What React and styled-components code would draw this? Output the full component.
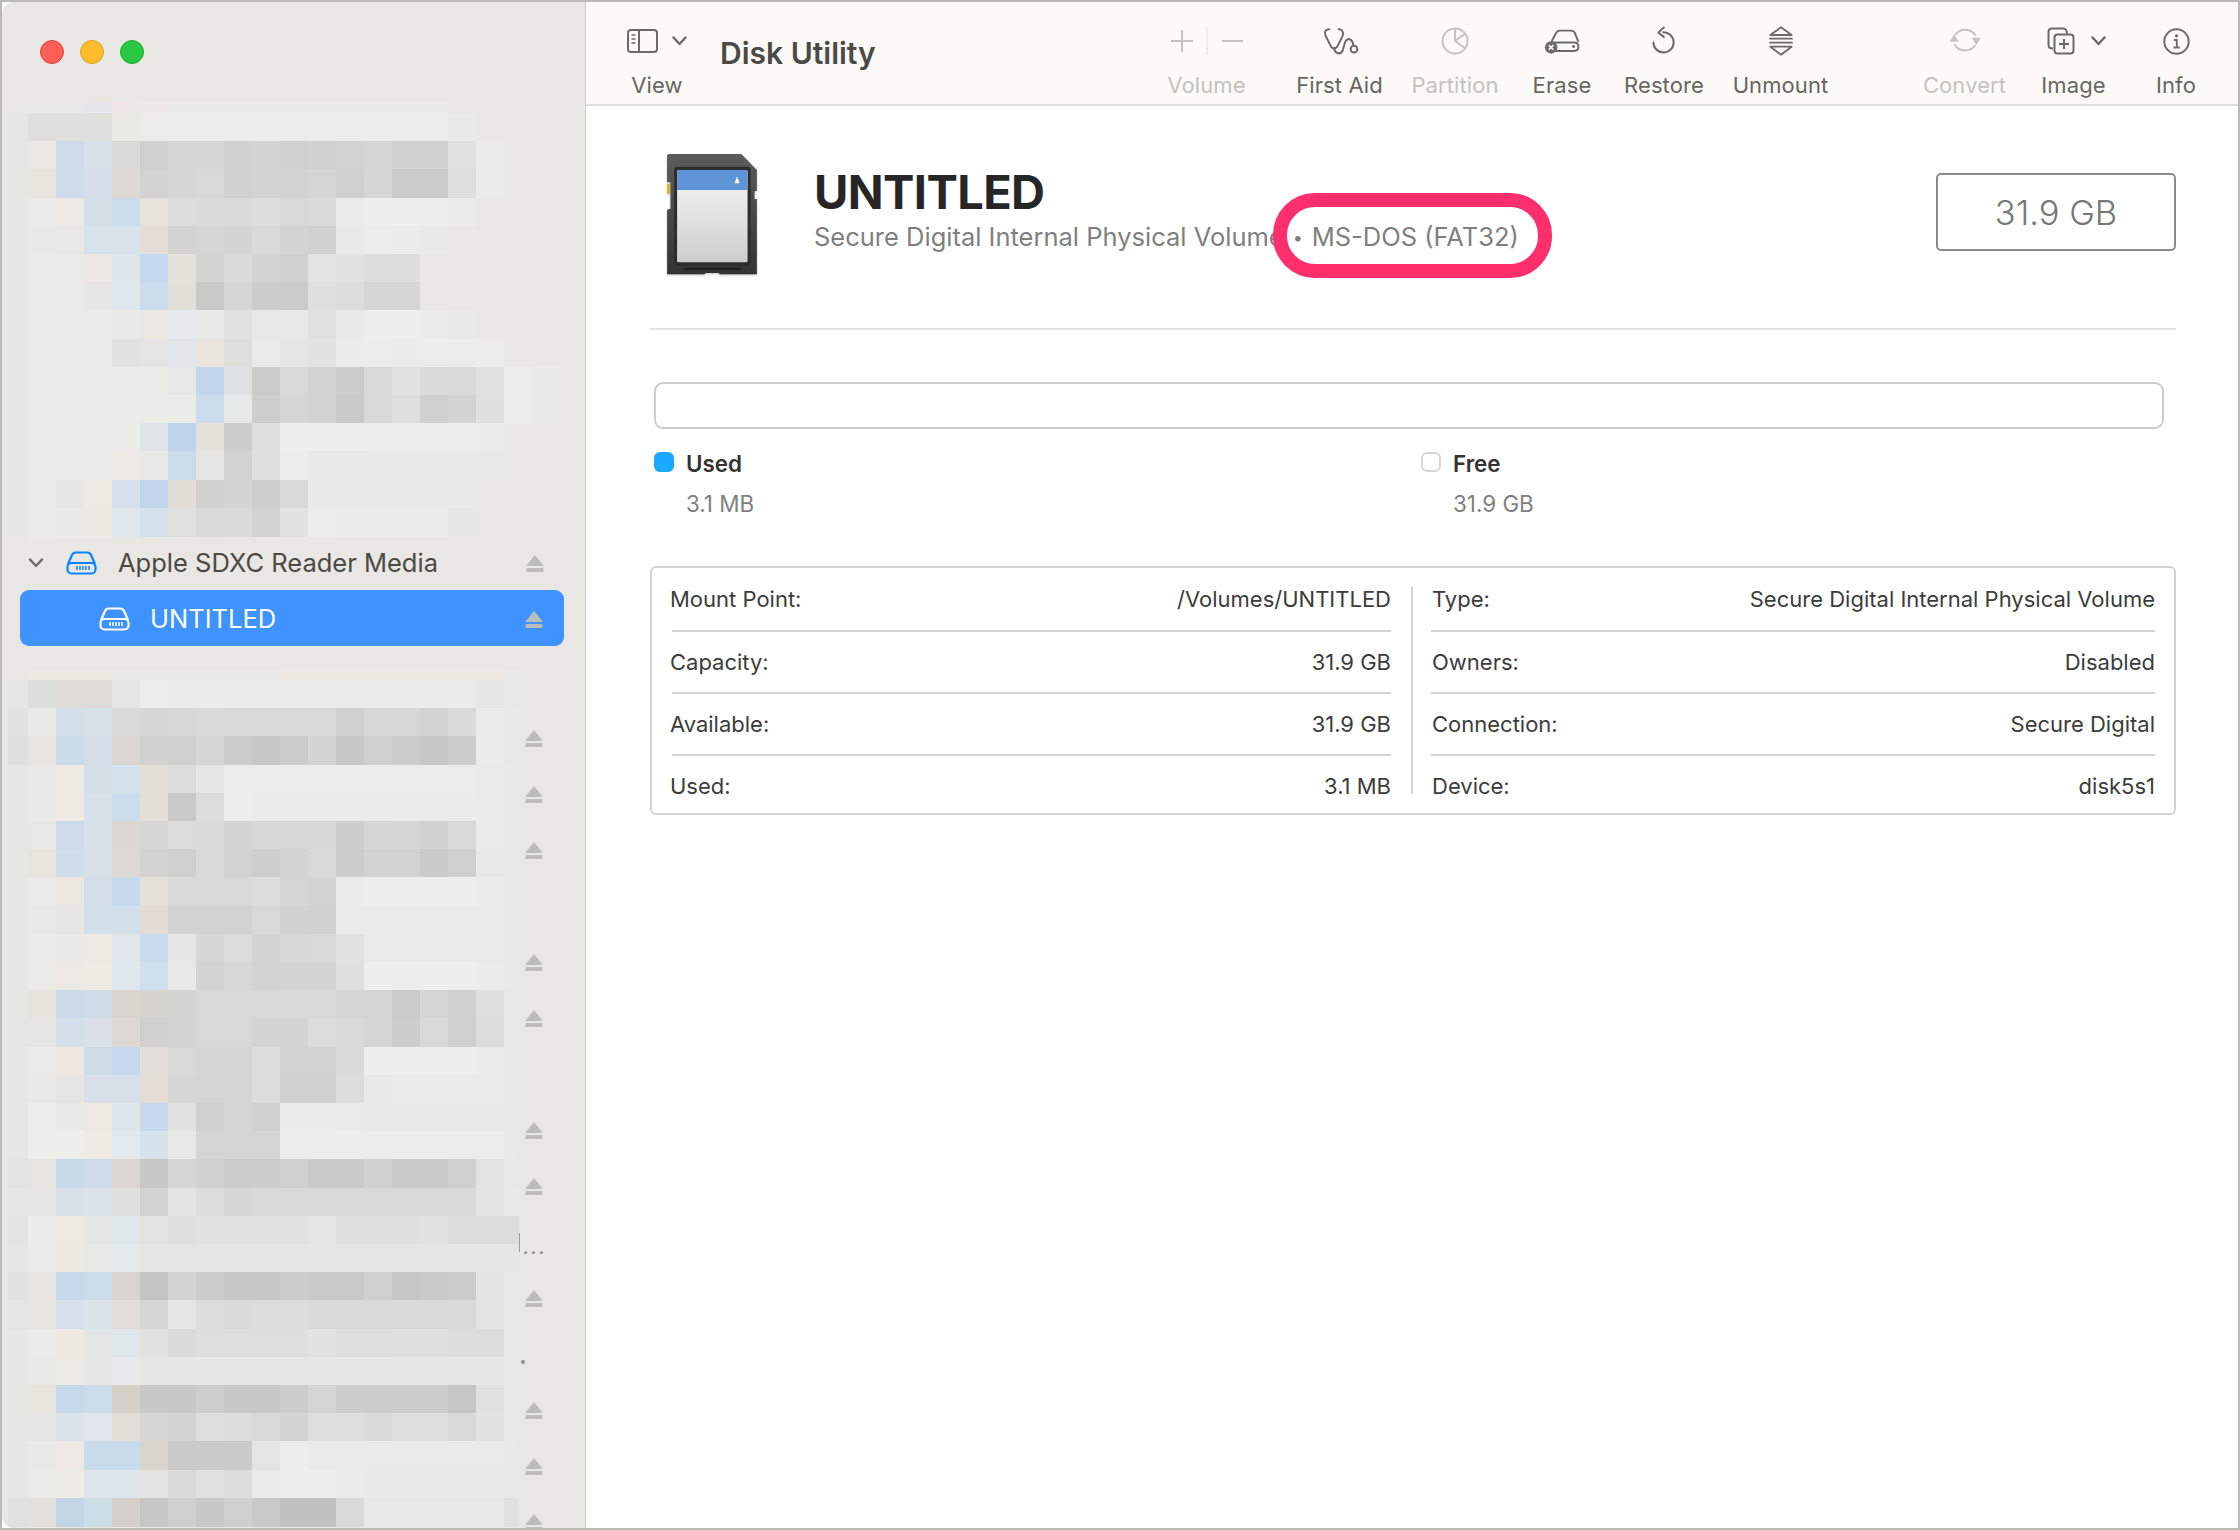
import React from "react";
import styled, { createGlobalStyle } from "styled-components";

const GlobalStyle = createGlobalStyle`
  html, body { margin: 0; padding: 0; background: #fff; }
  body { font-family: Inter, "Liberation Sans", sans-serif; -webkit-font-smoothing: antialiased; }
`;

const CELL = 28;
const ROW = 28.2;

// two chars = a warm grey, six chars = full colour, -- = nothing
const topMosaic = [
  "-- e6e9e5 e6e7e6 e5e5e8 ede5e8 ebe8e6 e9 e9 e9 e9 e9 e9 e9 e9 e9 e9",
  "e5 df df df e9e9e4 ec ec ec ec ec ec ec ec ec ec ec e9",
  "e5 ebe8e3 cddbe8 d5e0e9 d9 d0 d5 d5 d1 d4 cf d1 d2 d5 d1 d1 e0 ea",
  "e5 e8e5df cedce9 d6dfe9 dfd9d3 d2 d6 d8 d1 d3 d3 d5 cf d5 cb cb df eb",
  "e6 eaeae8 eee9e4 d5dfe8 cadcec e5e3dc dc da da dd d8 da eb ee ee ee eb",
  "e6 e9 e8 d8e2ea d7e2ea e3dcd7 d3 d5 d4 da d3 d1 e9 ec eb e9",
  "e6 ea ea ede8e3 dde4ea c4d9ee e4e1db d4 da d2 d0 e3 e1 dd dd",
  "e6 ea ea e6 dfe6ec cbdcec e1dfd8 c9 d6 cc cb df dd d6 d6",
  "e6 ea ea eaeaea e9 eae6e1 e5e8ec e9 e1 e8 e7 e0 e9 ed ed ea e9",
  "e6 ea ea ea e2 e4e4e5 e2e6e9 e9e4de de ea e4 e2 eb ec eb ec ec ec",
  "e6 ea ea ea eb eb e7e7e8 c1d5eb dee1e1 cb d8 d2 cc d8 e1 da d9 e0 ec e9",
  "e6 ea ea ea eb eb eb ccdcec e5e9e8 ce d5 d2 ca d8 de d0 d3 df ec e9",
  "e6 ea ea ea eb dfe5e7 bfd3e9 e5e2db cd de ed ed ed ec ec ec ec eb",
  "e6 ea ea ea ede9e4 e7e9e4 cadcec e4 d2 de ec e9 e9 e9 e9 e9 e9 e9",
  "e6 ea e5 ede9e3 d6e0ea c3d5ea e1dcd6 d1 d4 ce d9 e9 e8 e8 e8 e8 e8",
  "e6 eaeae8 e9 ece9e2 e0e6ee d4e2ee e1 d9 da d2 e2 ec eb eb eb eb e6",
];

const bottomMosaic = [
  "-- ece9e2 ece9e2 ece9e2 e9 e9 e9 e9 e9 e9 ebe8e1 ebe8e1 ebe8e1 ebe8e1 ebe8e1 ebe8e1 ebe8e1 ebe8e1 e9",
  "e5 dcdeda dedad5 dedad5 e5 ed eb eb eb eb eb eb eb eb eb eb eb e6 e8",
  "e2 e8 d2deea d7e0e9 d9 d5 d7 da d8 d8 d8 d8 cf d7 d7 d2 da eb e9",
  "df e7e4df cbdae9 d5dde9 dcd6d0 d1 cf d5 cc c7 cb d4 c7 cf cc c7 cd eb e7",
  "e6 e9 eee9e3 d5dfe8 d5e1ec e2ded8 db e4 ec ec ec ec ec ec ec ec ec ea e9",
  "e6 e9 eee9e3 d8e0e9 ccdcec e2ded8 c9 dc ed eb eb eb eb eb eb eb eb ea e9",
  "e6 e7 cddbe9 d7e1ea dcd6d0 d5 db da d4 d7 d7 d7 cd d6 d5 d1 d8 eb e9",
  "e6 e7e3dd cfdcea d7e0e9 dcd7d1 d2 d0 d9 d2 ce d4 d9 cc d2 d2 ca cf e8 e8",
  "e6 ea ece6e0 d3dee8 c7daec e3e0da d9 d8 d8 dc d5 d3 eb ee ee ee ee eb e9",
  "e6 e8 e6 d2deea d2deea e3dcd6 d2 d2 d2 d8 d1 d1 ea ea ea ea ea ea e9",
  "e6 eb e9 edeae3 dfe5ea c8dbec e6 d5 db d3 d7 d8 e1 ea ea ea ea ea e9",
  "e6 eb edeae5 eeebe4 dfe6ed d0dfec e8 d3 d7 d3 d4 d4 df ee ee ee ee eb e9",
  "e6 e6e3dd cbd9e8 d0dde8 dad6cf d6d4ce d3 d8 d8 d8 d8 d8 d5 d5 cb d5 cf de e8",
  "e6 e5 d4dfe9 dadfe9 ddd8d2 d0 d4 d8 d8 d4 d4 db d9 d5 cd d8 cf dc e8",
  "e6 ea ede6e0 cfdce8 c6d9ec e2dfda d8 d5 d5 dc d2 d2 da ee ee ee ee eb e9",
  "e6 e9 e5 d8dfe9 d8dfe9 e3dcd7 d5 d5 d5 dc d1 d1 dc e8 ea ea ea ea e9",
  "e6 ec e9 eee9e3 dde4ea c7d9ec e2 d0 d6 d1 eb eb ea e9 e9 e9 e9 e9 e9",
  "e6 ed ed eeeae4 e1e8ee d5e2ec e8 d5 d5 d5 ec ec ec ec ec ec ec ec e9",
  "e3 e6e4df c8d9e9 cfdbe8 dbd7d0 c8 d5 d1 cc cc d0 ca ca d1 ca ca cf e3 e8",
  "e5 e5 d7e0e9 dbe3ea df d3 e3 dc d6 d9 d9 d8 d8 d8 d8 d8 d8 e3 e9",
  "e3 eb edeae3 e3e6e5 e0e7ea e3 de e1 e1 e1 e1 e4 df df df e2 dc dc dc",
  "e6 eb ece9e3 e7 e4e9ea e5 e5 e5 e5 e5 e5 e5 e5 e5 e5 e5 e5 e5 e5",
  "e2 e8e4df c6d8e9 ccdbe9 d9d5ce c4 d3 cd c8 c8 cd c9 c9 cf c6 ca cb e3 e8",
  "e4 e6e4df d6e0ea dbe3e9 e2ddd8 d6 e5 dc d9 dc dc d9 d9 d9 d9 d9 d9 e3 e8",
  "e6 eb ede9e2 e4e6e5 e0e7ea e1 da de de de de e2 de de df df dc dc e8",
  "e6 e9 eceae5 e6 e5e9e9 e6 e6 e6 e6 e6 e6 e6 e6 e6 e6 e6 e6 e6 e8",
  "e6 e8e5df c6d8e9 cbdbe9 d5d1c9 c8 c8 ce c8 c8 cd d5 cd cd cd cd c6 e0 e8",
  "e6 e6 dae3ea dfe5ea e1ded8 d6 d4 de dc d8 d4 df de da de de d8 e2 e8",
  "e6 e9 eee9e4 c9dbeb c9dbeb d8d5cf ca ca ca e4 ed ea ea ea ea ea ea ea e9",
  "e6 ea ecebe6 dee4ec dee4ec e3 da e0 db ea ee ee eb e9 e9 e9 e9 e9 e9",
  "e0 e4e1dc c4d6e6 cddde6 d4cfc8 c6 cf c7 cf c9 c1 c1 d9 e7 e7 e7 e7 e7 e0",
];

const toColor = (t) => (t.length === 2 ? `#${t}${t}${(parseInt(t, 16) - 4).toString(16)}` : `#${t}`);

function Mosaic({ rows, width, height }) {
  return (
    <MosaicSvg width={width} height={height} shapeRendering="crispEdges">
      {rows.map((row, r) =>
        row.split(" ").map((t, c) => {
          if (t === "--") return null;
          const y = r === 0 ? 0 : 10 + (r - 1) * ROW;
          const x = c === 0 ? 0 : 20 + (c - 1) * CELL;
          return (
            <rect key={`${r}-${c}`} x={x} y={y} width={c === 0 ? 20 : CELL} height={r === 0 ? 10 : ROW + 0.5} fill={toColor(t)} />
          );
        })
      )}
    </MosaicSvg>
  );
}

const Eject = ({ top }) => (
  <EjectWrap $top={top}>
    <EjectGlyph />
  </EjectWrap>
);

const EjectGlyph = () => (
  <svg width="18" height="18" viewBox="0 0 18 18">
    <path d="M9 1 L17.3 11.2 Q17.6 12 16.8 12 L1.2 12 Q.4 12 .7 11.2 Z" fill="#bcbcb9" />
    <rect x="0.5" y="14" width="17" height="4.4" rx="1.2" fill="#bcbcb9" />
  </svg>
);

const DiskIcon = ({ color }) => (
  <svg width="31" height="24" viewBox="0 0 31 24" fill="none" stroke={color} strokeWidth="2.2">
    <path d="M2 13 L6 4 Q7 1.5 10 1.5 L21 1.5 Q24 1.5 25 4 L29 13" />
    <rect x="1.5" y="12" width="28" height="10.5" rx="4" />
    <path d="M11 15v4M14 15v4M17 15v4M20 15v4M23 15v4" strokeWidth="1.5" />
  </svg>
);

const Chevron = ({ color = "#6a6a67", w = 15, h = 10 }) => (
  <svg width={w} height={h} viewBox="0 0 15 10" fill="none" stroke={color} strokeWidth="2.4" strokeLinecap="round" strokeLinejoin="round">
    <path d="M1.5 1.5 L7.5 8 L13.5 1.5" />
  </svg>
);

const ON = "#6a6a67";
const OFF = "#c4c3be";

const ViewIcon = () => (
  <svg width="31" height="24" viewBox="0 0 31 24" fill="none" stroke={ON} strokeWidth="2">
    <rect x="1" y="1" width="29" height="22" rx="3" />
    <path d="M12 1v22" />
    <path d="M4.5 6h4M4.5 10h4M4.5 14h4" strokeWidth="1.6" />
  </svg>
);

const VolumeIcon = () => (
  <svg width="77" height="30" viewBox="0 0 77 30" fill="none" stroke={OFF} strokeWidth="2">
    <path d="M3 15h22M14 4v22" />
    <path d="M39 1v28" strokeWidth="1" stroke="#e2e1dc" />
    <path d="M54 15h21" />
  </svg>
);

const FirstAidIcon = () => (
  <svg width="40" height="32" viewBox="60 30 120 95" fill="none" stroke={ON} strokeWidth="6" strokeLinecap="round">
    <path d="M88 42 C78 42 72 48 76 60 L92 92 C96 102 108 102 113 92 L128 62 C132 50 126 42 116 42" />
    <path d="M102 100 C106 116 122 120 128 106 C132 96 132 84 138 76 C146 68 158 72 160 90" />
    <circle cx="162" cy="102" r="10" />
  </svg>
);

const PartitionIcon = () => (
  <svg width="28" height="28" viewBox="0 0 28 28" fill="none" stroke={OFF} strokeWidth="2">
    <circle cx="14" cy="14" r="12.5" />
    <path d="M14 1.5V14L24 21M14 14L23.5 7" />
  </svg>
);

const EraseIcon = () => (
  <svg width="40" height="27" viewBox="720 40 120 82" fill="none" stroke={ON} strokeWidth="6">
    <path d="M748 82 L762 55 Q765 48 774 48 L808 48 Q816 48 819 55 L830 82" />
    <path d="M750 84 L816 84 Q830 84 830 97 Q830 110 816 110 L750 110" />
    <circle cx="815" cy="96" r="4.5" fill={ON} stroke="none" />
    <circle cx="747" cy="99" r="19" fill={ON} stroke="none" />
    <path d="M740 92l14 14M754 92l-14 14" stroke="#fbfaf6" strokeWidth="5" />
  </svg>
);

const RestoreIcon = () => (
  <svg width="26" height="32" viewBox="1055 30 85 95" fill="none" stroke={ON} strokeWidth="6.5" strokeLinecap="round" strokeLinejoin="round">
    <path d="M1095 49 A33 33 0 1 1 1063 82" />
    <path d="M1097 33 L1079 50 L1097 64" />
  </svg>
);

const UnmountIcon = () => (
  <svg width="26" height="32" viewBox="1404 32 78 92" fill="none" stroke={ON} strokeWidth="5.5" strokeLinejoin="round">
    <path d="M1443 37 L1475 60 L1411 60 Z" />
    <path d="M1408 71h70M1408 83h70" />
    <path d="M1411 95 L1475 95 L1443 119 Z" />
  </svg>
);

const ConvertIcon = () => (
  <svg width="32" height="32" viewBox="146 34 96 96" fill="none" stroke={OFF} strokeWidth="6">
    <path d="M164 64 A37 37 0 0 1 226 66" />
    <path d="M225 94 A37 37 0 0 1 162 92" />
    <path d="M148 84 L162 62 L175 84 Z" fill={OFF} stroke="none" />
    <path d="M214 72 L241 72 L228 94 Z" fill={OFF} stroke="none" />
  </svg>
);

const ImageIcon = () => (
  <svg width="28" height="28" viewBox="0 0 28 28" fill="none" stroke={ON} strokeWidth="2">
    <path d="M6 21.5 Q1.5 21.5 1.5 18 L1.5 5 Q1.5 1.5 5 1.5 L16 1.5 Q20 1.5 20 6.5" />
    <rect x="7.5" y="7.5" width="19" height="19" rx="3" />
    <path d="M17 12v10M12 17h10" />
  </svg>
);

const InfoIcon = () => (
  <svg width="27" height="27" viewBox="0 0 27 27" fill="none" stroke={ON} strokeWidth="2">
    <circle cx="13.5" cy="13.5" r="12.2" />
    <circle cx="13.5" cy="7.8" r="1.6" fill={ON} stroke="none" />
    <path d="M10.8 12h3v7.5M10.5 19.5h6.2" strokeWidth="1.8" />
  </svg>
);

const SdCard = () => (
  <svg width="94" height="125" viewBox="76 64 282 376">
    <defs>
      <linearGradient id="sdBody" x1="0" y1="0" x2="0" y2="1">
        <stop offset="0" stopColor="#5c5c5b" />
        <stop offset="1" stopColor="#333332" />
      </linearGradient>
      <linearGradient id="sdLabel" x1="0" y1="0" x2="0" y2="1">
        <stop offset="0" stopColor="#f6f6f6" />
        <stop offset="1" stopColor="#cdcdcd" />
      </linearGradient>
    </defs>
    <path
      d="M86 70 L305 70 L352 118 L352 180 L345 182 L345 205 L352 205 L352 432 L240 432 L237 428 L198 428 L195 432 L82 432 L82 238 L92 235 L92 155 L82 155 L82 74 Z"
      fill="url(#sdBody)"
    />
    <rect x="82" y="160" width="8" height="30" fill="#d8b320" />
    <rect x="103" y="108" width="230" height="298" rx="10" fill="#2d2d2d" />
    <rect x="112" y="118" width="212" height="278" rx="5" fill="url(#sdLabel)" />
    <path d="M112 123 Q112 118 117 118 L319 118 Q324 118 324 123 L324 178 L112 178 Z" fill="#5f95d7" />
    <path d="M285 158 L300 158 L292 138 Z" fill="#fff" />
    <rect x="133" y="412" width="170" height="8" rx="4" fill="#1e1e1e" />
  </svg>
);

const tools = [
  { label: "Volume", w: 77, ml: 0, off: true, icon: <VolumeIcon /> },
  { label: "First Aid", w: 87, ml: 51, icon: <FirstAidIcon /> },
  { label: "Partition", w: 88, ml: 28, off: true, icon: <PartitionIcon /> },
  { label: "Erase", w: 58, ml: 34, icon: <EraseIcon /> },
  { label: "Restore", w: 80, ml: 33, icon: <RestoreIcon /> },
  { label: "Unmount", w: 95, ml: 29, icon: <UnmountIcon /> },
  { label: "Convert", w: 83, ml: 95, off: true, icon: <ConvertIcon /> },
  {
    label: "Image",
    w: 65,
    ml: 35,
    gap: 16,
    pad: 5,
    icon: (
      <>
        <ImageIcon />
        <Chevron />
      </>
    ),
  },
  { label: "Info", w: 38, ml: 51, icon: <InfoIcon /> },
];

const details = [
  [
    ["Mount Point:", "/Volumes/UNTITLED"],
    ["Capacity:", "31.9 GB"],
    ["Available:", "31.9 GB"],
    ["Used:", "3.1 MB"],
  ],
  [
    ["Type:", "Secure Digital Internal Physical Volume"],
    ["Owners:", "Disabled"],
    ["Connection:", "Secure Digital"],
    ["Device:", "disk5s1"],
  ],
];

const ejectTops = [59, 115, 171, 283, 339, 451, 507, 619, 731, 787, 843];

export default function App() {
  return (
    <Window>
      <GlobalStyle />
      <Sidebar>
        <Lights>
          <Light $bg="#ff5f57" $edge="#e0443e" />
          <Light $bg="#febc2e" $edge="#dea123" />
          <Light $bg="#28c840" $edge="#1aab29" />
        </Lights>
        <MosaicBlock>
          <Mosaic rows={topMosaic} width={552} height={435} />
        </MosaicBlock>
        <MediaRow>
          <ChevronSlot>
            <Chevron w={16} h={10} />
          </ChevronSlot>
          <DiskIcon color="#0a84ff" />
          <MediaName>Apple SDXC Reader Media</MediaName>
          <EjectGlyph />
        </MediaRow>
        <SelectedRow>
          <DiskIcon color="#fff" />
          <SelectedName>UNTITLED</SelectedName>
          <EjectGlyph />
        </SelectedRow>
        <BottomBlock>
          <Mosaic rows={bottomMosaic} width={511} height={860} />
          {ejectTops.map((t) => (
            <Eject key={t} top={t} />
          ))}
          <StrayBar />
          <StrayDots>...</StrayDots>
          <StrayDot />
        </BottomBlock>
      </Sidebar>
      <Main>
        <Toolbar>
          <ViewTool>
            <IconSlot $gap={14}>
              <ViewIcon />
              <Chevron />
            </IconSlot>
            <ToolLabel>View</ToolLabel>
          </ViewTool>
          <AppTitle>Disk Utility</AppTitle>
          <Tools>
            {tools.map((t) => (
              <Tool key={t.label} $w={t.w} $ml={t.ml}>
                <IconSlot $gap={t.gap} $pad={t.pad}>
                  {t.icon}
                </IconSlot>
                <ToolLabel $off={t.off}>{t.label}</ToolLabel>
              </Tool>
            ))}
          </Tools>
        </Toolbar>
        <Pane>
          <Header>
            <CardSlot>
              <SdCard />
            </CardSlot>
            <TitleBlock>
              <VolumeTitle>UNTITLED</VolumeTitle>
              <VolumeSub>
                Secure Digital Internal Physical Volume
                <Bullet>•</Bullet>
                MS-DOS (FAT32)
                <Highlight />
              </VolumeSub>
            </TitleBlock>
            <SizeBox>31.9 GB</SizeBox>
          </Header>
          <UsageBar />
          <Legend>
            <LegendItem>
              <Swatch $bg="#1ba8ff" />
              <div>
                <LegendName>Used</LegendName>
                <LegendValue>3.1 MB</LegendValue>
              </div>
            </LegendItem>
            <LegendItem>
              <Swatch $bg="#fff" $edge="#d6d6d6" />
              <div>
                <LegendName>Free</LegendName>
                <LegendValue>31.9 GB</LegendValue>
              </div>
            </LegendItem>
          </Legend>
          <InfoTable>
            <InfoCol $w={759} $left={20} $right={20} $nudge={-2}>
              {details[0].map(([k, v]) => (
                <InfoRow key={k}>
                  <span>{k}</span>
                  <span>{v}</span>
                </InfoRow>
              ))}
            </InfoCol>
            <ColDivider />
            <InfoCol $left={18} $right={19} $nudge={1}>
              {details[1].map(([k, v]) => (
                <InfoRow key={k}>
                  <span>{k}</span>
                  <span>{v}</span>
                </InfoRow>
              ))}
            </InfoCol>
          </InfoTable>
        </Pane>
      </Main>
    </Window>
  );
}

const Window = styled.div`
  box-sizing: border-box;
  width: 2240px;
  height: 1530px;
  display: flex;
  overflow: hidden;
  background: #fff;
  border: 2px solid #b9b9b6;
`;

const Sidebar = styled.aside`
  box-sizing: border-box;
  width: 584px;
  flex: none;
  background: #e8e7e3;
  border-right: 1px solid #cfcec9;
  border-top-left-radius: 12px;
  border-bottom-left-radius: 12px;
  overflow: hidden;
  display: flex;
  flex-direction: column;
`;

const Lights = styled.div`
  height: 101px;
  flex: none;
  box-sizing: border-box;
  display: flex;
  gap: 16px;
  padding: 38px 0 0 38px;
`;

const Light = styled.span`
  box-sizing: border-box;
  width: 24px;
  height: 24px;
  border-radius: 50%;
  background: ${(p) => p.$bg};
  border: 1px solid ${(p) => p.$edge};
`;

const MosaicBlock = styled.div`
  height: 435px;
  flex: none;
  padding-left: 6px;
`;

const MosaicSvg = styled.svg`
  display: block;
`;

const MediaRow = styled.div`
  height: 52px;
  flex: none;
  box-sizing: border-box;
  display: flex;
  align-items: center;
  padding: 0 41px 3px 26px;
`;

const ChevronSlot = styled.span`
  width: 38px;
  display: flex;
`;

const MediaName = styled.span`
  flex: 1;
  margin-left: 21px;
  font-size: 25.5px;
  color: #4a4a46;
`;

const SelectedRow = styled.div`
  height: 56px;
  flex: none;
  width: 544px;
  box-sizing: border-box;
  margin-left: 18px;
  display: flex;
  align-items: center;
  padding: 1px 21px 0 79px;
  background: #3f93ff;
  border-radius: 9px;
`;

const SelectedName = styled.span`
  flex: 1;
  margin-left: 20px;
  font-size: 25.5px;
  color: #fff;
`;

const BottomBlock = styled.div`
  position: relative;
  flex: none;
  margin-top: 24px;
  padding-left: 6px;
`;

const EjectWrap = styled.span`
  position: absolute;
  left: 523px;
  top: ${(p) => p.$top}px;
  display: block;
  line-height: 0;
`;

const StrayBar = styled.span`
  position: absolute;
  left: 517px;
  top: 563px;
  width: 1px;
  height: 19px;
  background: #9a9a98;
`;

const StrayDots = styled.span`
  position: absolute;
  left: 521px;
  top: 565px;
  font-size: 16px;
  font-weight: 700;
  line-height: 26px;
  letter-spacing: 2.5px;
  color: #8f8f8d;
`;

const StrayDot = styled.span`
  position: absolute;
  left: 519px;
  top: 690px;
  width: 4px;
  height: 4px;
  border-radius: 50%;
  background: #8f8f8d;
`;

const Main = styled.main`
  flex: 1;
  min-width: 0;
  display: flex;
  flex-direction: column;
`;

const Toolbar = styled.header`
  box-sizing: border-box;
  height: 104px;
  flex: none;
  display: flex;
  padding: 18px 43px 0 40px;
  background: #fbfaf6;
  border-bottom: 2px solid #dcdcda;
`;

const ViewTool = styled.div`
  width: 62px;
  display: flex;
  flex-direction: column;
  align-items: center;
`;

const Tool = styled.div`
  width: ${(p) => p.$w}px;
  margin-left: ${(p) => p.$ml}px;
  display: flex;
  flex-direction: column;
  align-items: center;
`;

const IconSlot = styled.div`
  height: 42px;
  display: flex;
  align-items: center;
  justify-content: center;
  gap: ${(p) => p.$gap || 12}px;
  padding-left: ${(p) => p.$pad || 0}px;
`;

const ToolLabel = styled.span`
  margin-top: 9px;
  font-size: 22px;
  line-height: 28px;
  letter-spacing: 0.1px;
  white-space: nowrap;
  color: ${(p) => (p.$off ? "#c4c3be" : "#666663")};
`;

const AppTitle = styled.h1`
  margin: 14px 0 0 32px;
  font-size: 30px;
  line-height: 38px;
  font-weight: 600;
  color: #4b4a47;
  white-space: nowrap;
`;

const Tools = styled.div`
  margin-left: auto;
  display: flex;
`;

const Pane = styled.div`
  flex: 1;
  padding: 0 62px 0 64px;
`;

const Header = styled.section`
  box-sizing: border-box;
  height: 224px;
  display: flex;
  align-items: flex-start;
  border-bottom: 2px solid #e4e4e4;
`;

const CardSlot = styled.div`
  margin: 46px 0 0 15px;
  line-height: 0;
  filter: drop-shadow(0 1px 1px rgba(0, 0, 0, 0.25));
`;

const TitleBlock = styled.div`
  margin: 60px 0 0 55px;
`;

const VolumeTitle = styled.h2`
  margin: 0;
  font-size: 47px;
  line-height: 52px;
  font-weight: 700;
  letter-spacing: -0.6px;
  color: #262626;
`;

const VolumeSub = styled.div`
  position: relative;
  margin-top: 2px;
  font-size: 25.5px;
  line-height: 34px;
  white-space: nowrap;
  color: #7f7f7f;
`;

const Bullet = styled.span`
  display: inline-block;
  width: 28px;
  text-align: center;
  font-size: 18px;
  position: relative;
  top: -2px;
`;

const Highlight = styled.span`
  position: absolute;
  box-sizing: border-box;
  left: 459px;
  top: -27px;
  width: 279px;
  height: 85px;
  border: 14px solid #ff2e6c;
  border-radius: 42px;
`;

const SizeBox = styled.div`
  box-sizing: border-box;
  margin: 67px 0 0 auto;
  width: 240px;
  height: 78px;
  display: flex;
  align-items: center;
  justify-content: center;
  border: 2px solid #8a8a8a;
  border-radius: 5px;
  font-size: 34.5px;
  font-weight: 300;
  color: #777;
`;

const UsageBar = styled.div`
  box-sizing: border-box;
  width: 1510px;
  height: 47px;
  margin: 52px 0 0 4px;
  border: 2px solid #cdcdcd;
  border-radius: 9px;
`;

const Legend = styled.div`
  display: grid;
  grid-template-columns: 767px 1fr;
  margin: 20px 0 0 4px;
`;

const LegendItem = styled.div`
  display: flex;
  gap: 12px;
`;

const Swatch = styled.span`
  box-sizing: border-box;
  width: 20px;
  height: 20px;
  margin-top: 3px;
  border-radius: 6px;
  background: ${(p) => p.$bg};
  border: ${(p) => (p.$edge ? `2px solid ${p.$edge}` : "none")};
`;

const LegendName = styled.div`
  font-size: 22.4px;
  line-height: 30px;
  font-weight: 600;
  color: #333;
`;

const LegendValue = styled.div`
  margin-top: 10px;
  font-size: 22.4px;
  line-height: 30px;
  color: #7f7f7f;
`;

const InfoTable = styled.section`
  box-sizing: border-box;
  height: 249px;
  margin-top: 47px;
  display: flex;
  border: 2px solid #d2d2d2;
  border-radius: 6px;
`;

const InfoCol = styled.div`
  box-sizing: border-box;
  flex: ${(p) => (p.$w ? `0 0 ${p.$w}px` : 1)};
  min-width: 0;
  padding: 0 ${(p) => p.$right}px 0 ${(p) => p.$left}px;
  display: grid;
  grid-template-rows: 64px 62px 62px 1fr;
  span:first-child {
    margin-left: ${(p) => p.$nudge || 0}px;
  }
`;

const InfoRow = styled.div`
  display: flex;
  align-items: center;
  justify-content: space-between;
  font-size: 22px;
  color: #3c3c3c;
  border-bottom: 2px solid #d4d4d4;
  &:last-child {
    border-bottom: none;
    padding-top: 2px;
  }
`;

const ColDivider = styled.span`
  flex: none;
  width: 2px;
  height: 207px;
  align-self: center;
  background: #d4d4d4;
`;
